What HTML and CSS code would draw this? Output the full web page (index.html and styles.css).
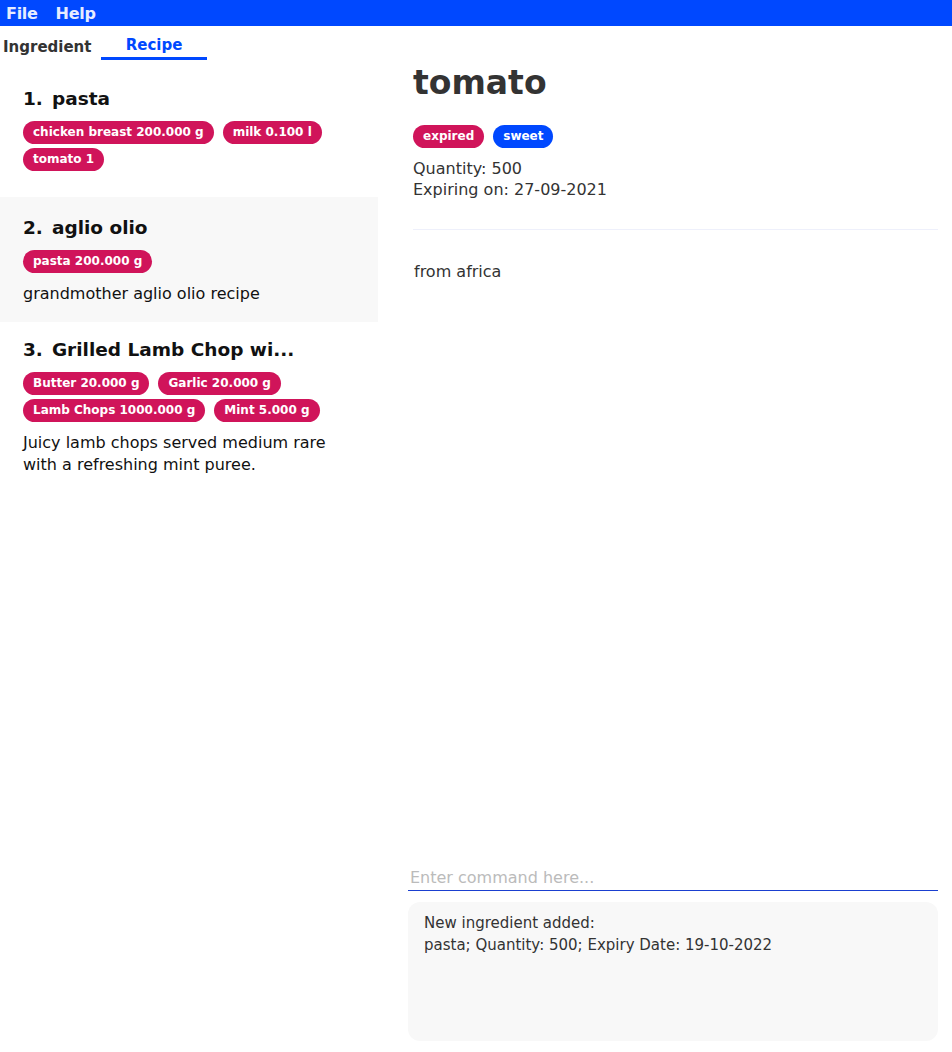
FILE: index.html
```html
<!DOCTYPE html>
<html>
<head>
<meta charset="utf-8">
<link rel="stylesheet" href="styles.css">
</head>
<body>
<div class="app">
  <nav class="menubar">
    <span class="menu-item">File</span>
    <span class="menu-item">Help</span>
  </nav>
  <div class="tabs">
    <span class="tab">Ingredient</span>
    <span class="tab tab--active">Recipe</span>
  </div>
  <main class="main">
    <section class="list">
      <article class="item item--nodesc">
        <h2 class="item-title"><span class="num">1.</span>pasta</h2>
        <div class="tags">
          <span class="tag">chicken breast 200.000 g</span>
          <span class="tag">milk 0.100 l</span>
          <span class="tag">tomato 1</span>
        </div>
      </article>
      <article class="item item--alt">
        <h2 class="item-title"><span class="num">2.</span>aglio olio</h2>
        <div class="tags">
          <span class="tag">pasta 200.000 g</span>
        </div>
        <p class="desc">grandmother aglio olio recipe</p>
      </article>
      <article class="item item--last">
        <h2 class="item-title"><span class="num">3.</span>Grilled Lamb Chop wi...</h2>
        <div class="tags">
          <span class="tag">Butter 20.000 g</span>
          <span class="tag">Garlic 20.000 g</span>
          <span class="tag">Lamb Chops 1000.000 g</span>
          <span class="tag">Mint 5.000 g</span>
        </div>
        <p class="desc">Juicy lamb chops served medium rare<br>with a refreshing mint puree.</p>
      </article>
    </section>
    <section class="right">
      <div class="detail">
        <h1 class="detail-title">tomato</h1>
        <div class="tags detail-tags">
          <span class="tag">expired</span>
          <span class="tag tag--blue">sweet</span>
        </div>
        <p class="meta">Quantity: 500<br>Expiring on: 27-09-2021</p>
        <hr class="divider">
        <p class="note">from africa</p>
      </div>
      <div class="command">
        <input class="command-input" type="text" placeholder="Enter command here...">
      </div>
      <div class="result">New ingredient added:<br>pasta; Quantity: 500; Expiry Date: 19-10-2022</div>
    </section>
  </main>
</div>
</body>
</html>
```

FILE: styles.css
```css
* { box-sizing: border-box; }
html, body { margin: 0; padding: 0; background: #fff; }
body {
  font-family: "DejaVu Sans", "Noto Sans", sans-serif;
  color: #222;
  width: 952px;
  height: 1052px;
  overflow: hidden;
}
.app { display: flex; flex-direction: column; height: 1052px; }

.menubar {
  height: 26px;
  background: #0048ff;
  display: flex;
  align-items: center;
  gap: 18px;
  padding-left: 6px;
}
.menu-item {
  color: #e6ecff;
  font-weight: bold;
  font-size: 16px;
  letter-spacing: -0.3px;
}

.tabs {
  height: 34px;
  display: flex;
  align-items: flex-start;
}
.tab {
  font-size: 15px;
  font-weight: 600;
  color: #333;
  padding: 12px 0 0 3px;
  width: 101px;
}
.tab--active {
  color: #0048ff;
  width: 106px;
  padding: 10px 0 0 0;
  text-align: center;
  height: 34px;
  border-bottom: 3px solid #0048ff;
}

.main { flex: 1; display: flex; min-height: 0; }

.list {
  width: 378px;
  padding-top: 9px;
  display: flex;
  flex-direction: column;
}
.item { padding: 18px 23px 17px 23px; }
.item--nodesc { padding-bottom: 26px; }
.item--alt { background: #f8f8f8; padding-top: 19px; }
.item--last { padding-top: 16px; }
.item-title {
  margin: 0 0 10px 0;
  font-size: 18.5px;
  line-height: 24px;
  font-weight: bold;
  color: #111;
  white-space: nowrap;
}
.num { margin-right: 9px; }
.tags {
  display: flex;
  flex-wrap: wrap;
  gap: 4px 9px;
}
.tag {
  background: #d0145a;
  color: #fff;
  font-size: 12px;
  font-weight: bold;
  height: 23px;
  line-height: 23px;
  padding: 0 10px;
  border-radius: 12px;
  white-space: nowrap;
}
.tag--blue { background: #0048ff; }
.desc {
  margin: 10px 0 0 0;
  font-size: 16px;
  line-height: 22px;
  color: #111;
}

.right {
  flex: 1;
  display: flex;
  flex-direction: column;
  padding: 0 14px 11px 30px;
}
.detail { flex: 1; padding-left: 5px; }
.detail-title {
  margin: 0;
  font-size: 33px;
  line-height: 46px;
  font-weight: bold;
  color: #333;
}
.detail-tags { margin-top: 19px; }
.meta {
  margin: 10px 0 0 0;
  font-size: 16px;
  line-height: 21px;
  color: #333;
}
.divider {
  border: 0;
  border-top: 1px solid #eef0fb;
  margin: 29px 0 0 0;
}
.note {
  margin: 31px 0 0 1px;
  font-size: 16px;
  line-height: 21px;
  color: #333;
}
.command { margin-bottom: 11px; }
.command-input {
  width: 100%;
  height: 25px;
  border: 0;
  border-bottom: 1px solid #1a3fd0;
  outline: none;
  font-family: inherit;
  font-size: 16px;
  padding: 0 2px 2px 2px;
  background: transparent;
  color: #333;
}
.command-input::placeholder { color: #bbb; }
.result {
  height: 139px;
  background: #f8f8f8;
  border-radius: 12px;
  padding: 10px 16px;
  font-size: 15px;
  line-height: 22px;
  color: #333;
}
```
